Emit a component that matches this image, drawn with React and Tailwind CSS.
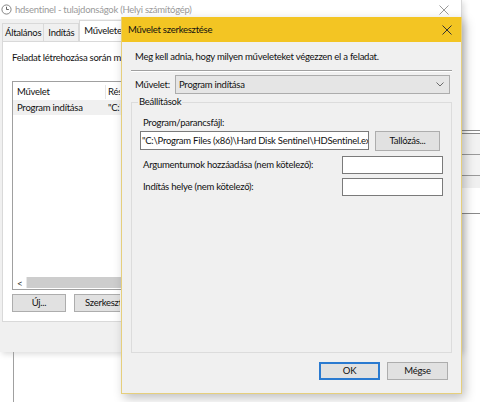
import React from 'react';

const font = { fontFamily: 'Lato, "Noto Sans", sans-serif' };

function ClockIcon() {
  return (
    <svg width="11" height="11" viewBox="0 0 12 12" className="shrink-0">
      <circle cx="6" cy="6" r="5" fill="#fff" stroke="#7a7a7a" strokeWidth="1" />
      <path d="M6 3 V6 H8.5" fill="none" stroke="#555" strokeWidth="1" />
    </svg>
  );
}

function CloseX({ color = '#9a9a9a' }) {
  return (
    <svg width="10" height="10" viewBox="0 0 10 10">
      <path d="M0.5 0.5 L9.5 9.5 M9.5 0.5 L0.5 9.5" stroke={color} strokeWidth="1" />
    </svg>
  );
}

function Chevron() {
  return (
    <svg width="8" height="5" viewBox="0 0 8 5">
      <path d="M0.5 0.5 L4 4 L7.5 0.5" fill="none" stroke="#6a6a6a" strokeWidth="1" />
    </svg>
  );
}

const t = 'text-[9.5px] leading-[14px] tracking-[-0.25px] text-[#111] whitespace-nowrap';

// the part of the properties window that the dialog covers is clipped at x=121
function BackgroundWindow() {
  return (
    <div className="flex flex-col w-[462px] h-[352px] bg-[#f0f0f0] border-r border-[#d8d8d8] shadow-[2px_2px_6px_rgba(0,0,0,0.15)]">
      <div className="flex items-center h-[19px] bg-white pl-[1px] pr-[12px] gap-[3px]">
        <ClockIcon />
        <span className={t + ' !text-[#9a9a9a] flex-1'}>hdsentinel - tulajdonságok (Helyi számítógép)</span>
        <CloseX />
      </div>
      <div className="flex items-end h-[22px] pl-[2px] w-[121px] overflow-hidden">
        <div className={t + ' h-[18px] px-[2px] flex items-center border border-[#d9d9d9] border-b-0 bg-[#f0f0f0]'}>Általános</div>
        <div className={t + ' h-[18px] px-[4px] flex items-center border border-[#d9d9d9] border-b-0 border-l-0 bg-[#f0f0f0]'}>Indítás</div>
        <div className={t + ' h-[21px] px-[4px] flex items-center border border-[#d9d9d9] border-b-0 bg-white'}>Műveletek</div>
      </div>
      <div className="flex flex-col bg-white border border-[#d9d9d9] mx-[2px] h-[281px] px-[9px]">
        <div className={t + ' pt-[9px] h-[39px] w-[109px] overflow-hidden'}>Feladat létrehozása során meg kell adnia</div>
        <div className="flex flex-col h-[209px] border border-[#a0a0a0] bg-white">
          <div className="flex h-[17px] items-center mt-[1px]">
            <div className={t + ' w-[93px] pl-[4px] border-r border-[#e5e5e5]'}>Művelet</div>
            <div className={t + ' pl-[2px] w-[14px] overflow-hidden'}>Részletek</div>
          </div>
          <div className="flex h-[15px] items-center bg-[#f0f0f0]">
            <div className={t + ' w-[93px] pl-[4px]'}>Program indítása</div>
            <div className={t + ' pl-[2px] w-[14px] overflow-hidden'}>"C:\Program Files</div>
          </div>
          <div className="flex-1" />
          <div className="flex items-center h-[11px] bg-[#e8e8e8] mx-[1px] mb-[1px]">
            <span className="text-[10px] leading-none text-[#333] w-[12px] pl-[3px] bg-white h-full flex items-center">&lt;</span>
            <div className="flex-1 h-full bg-[#cdcdcd] ml-[1px]" />
          </div>
        </div>
        <div className="flex gap-[8px] mt-[4px] w-[108px] overflow-hidden">
          <div className={t + ' shrink-0 w-[54px] h-[18px] flex items-center justify-center bg-[#e1e1e1] border border-[#adadad]'}>Új...</div>
          <div className={t + ' shrink-0 w-[80px] h-[18px] flex items-center pl-[10px] bg-[#e1e1e1] border border-[#adadad]'}>Szerkesztés...</div>
        </div>
      </div>
    </div>
  );
}

function RightStrip() {
  return (
    <div className="flex flex-col w-[18px] pt-[130px]">
      <div className="h-[1px] bg-[#8a8a8a]" />
      <div className="h-[2px]" />
      <div className="h-[1px] bg-[#8a8a8a]" />
      <div className="h-[20px] bg-[#f2f2f2]" />
      <div className="h-[1px] bg-[#9a9a9a]" />
      <div className="h-[20px] bg-[#f4f4f4]" />
      <div className="h-[1px] bg-[#9a9a9a]" />
      <div className="h-[12px] bg-[#f0f0f0]" />
      <div className="h-[25px] bg-white" />
      <div className="h-[1px] bg-[#8a8a8a]" />
    </div>
  );
}

function Dialog() {
  return (
    <div className="absolute left-[121px] top-[17px] w-[341px] h-[377px] flex flex-col bg-[#f0f0f0] border border-[#e6cf7c] border-t-0 shadow-[3px_4px_10px_rgba(0,0,0,0.25)]">
      <div className="flex items-center h-[25px] bg-[#f3c523] pl-[6px] pr-[9px]">
        <span className={t + ' flex-1 pt-[1px]'}>Művelet szerkesztése</span>
        <CloseX color="#333" />
      </div>
      <div className="flex flex-col px-[9px] flex-1">
        <div className={t + ' pl-[4px] pt-[8px] h-[28px]'}>Meg kell adnia, hogy milyen műveleteket végezzen el a feladat.</div>
        <div className="h-[2px] border-t border-[#a0a0a0] border-b border-b-white" />
        <div className="flex items-center mt-[3px] h-[19px]">
          <span className={t + ' w-[44px] pl-[4px]'}>Művelet:</span>
          <div className="flex-1 h-[19px] flex items-center bg-[#e5e5e5] border border-[#acacac] pl-[3px] pr-[5px] mr-[2px]">
            <span className={t + ' flex-1'}>Program indítása</span>
            <Chevron />
          </div>
        </div>
        <div className="relative mt-[8px] h-[251px] border border-[#dcdcdc] px-[8px] pt-[13px]">
          <span className={t + ' absolute left-[6px] top-[-8px] px-[1px] bg-[#f0f0f0]'}>Beállítások</span>
          <div className={t + ' pl-[3px] h-[15px]'}>Program/parancsfájl:</div>
          <div className="flex gap-[6px]">
            <div className={t + ' w-[229px] h-[19px] bg-white border border-[#7a7a7a] flex items-center pl-[1px] overflow-hidden'}>"C:\Program Files (x86)\Hard Disk Sentinel\HDSentinel.exe"</div>
            <div className={t + ' w-[65px] h-[20px] bg-[#e1e1e1] border border-[#adadad] flex items-center justify-center'}>Tallózás...</div>
          </div>
          <div className="flex items-center justify-between mt-[5px] h-[18px]">
            <span className={t + ' pl-[3px]'}>Argumentumok hozzáadása (nem kötelező):</span>
            <div className="w-[101px] h-[18px] bg-white border border-[#7a7a7a]" />
          </div>
          <div className="flex items-center justify-between mt-[4px] h-[18px]">
            <span className={t + ' pl-[3px]'}>Indítás helye (nem kötelező):</span>
            <div className="w-[101px] h-[18px] bg-white border border-[#7a7a7a]" />
          </div>
        </div>
        <div className="flex justify-end gap-[7px] mt-[9px] pr-[4px]">
          <div className={t + ' w-[61px] h-[18px] bg-[#e1e1e1] border-2 border-[#2a7ad0] flex items-center justify-center'}>OK</div>
          <div className={t + ' w-[61px] h-[18px] bg-[#e1e1e1] border border-[#adadad] flex items-center justify-center'}>Mégse</div>
        </div>
      </div>
    </div>
  );
}

export default function App() {
  return (
    <div className="relative w-[480px] h-[402px] bg-white overflow-hidden" style={font}>
      <div className="flex">
        <BackgroundWindow />
        <RightStrip />
      </div>
      <div className="flex h-[50px]">
        <div className="w-[13px]" />
        <div className="w-[1px] bg-[#a0a0a0]" />
      </div>
      <Dialog />
    </div>
  );
}
